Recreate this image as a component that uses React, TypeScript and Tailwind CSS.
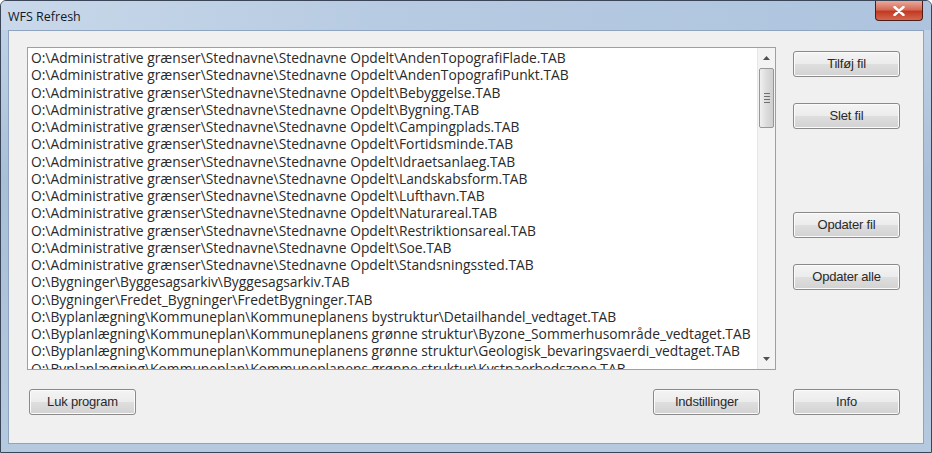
import React from "react";

const files: string[] = [
  "O:\\Administrative grænser\\Stednavne\\Stednavne Opdelt\\AndenTopografiFlade.TAB",
  "O:\\Administrative grænser\\Stednavne\\Stednavne Opdelt\\AndenTopografiPunkt.TAB",
  "O:\\Administrative grænser\\Stednavne\\Stednavne Opdelt\\Bebyggelse.TAB",
  "O:\\Administrative grænser\\Stednavne\\Stednavne Opdelt\\Bygning.TAB",
  "O:\\Administrative grænser\\Stednavne\\Stednavne Opdelt\\Campingplads.TAB",
  "O:\\Administrative grænser\\Stednavne\\Stednavne Opdelt\\Fortidsminde.TAB",
  "O:\\Administrative grænser\\Stednavne\\Stednavne Opdelt\\Idraetsanlaeg.TAB",
  "O:\\Administrative grænser\\Stednavne\\Stednavne Opdelt\\Landskabsform.TAB",
  "O:\\Administrative grænser\\Stednavne\\Stednavne Opdelt\\Lufthavn.TAB",
  "O:\\Administrative grænser\\Stednavne\\Stednavne Opdelt\\Naturareal.TAB",
  "O:\\Administrative grænser\\Stednavne\\Stednavne Opdelt\\Restriktionsareal.TAB",
  "O:\\Administrative grænser\\Stednavne\\Stednavne Opdelt\\Soe.TAB",
  "O:\\Administrative grænser\\Stednavne\\Stednavne Opdelt\\Standsningssted.TAB",
  "O:\\Bygninger\\Byggesagsarkiv\\Byggesagsarkiv.TAB",
  "O:\\Bygninger\\Fredet_Bygninger\\FredetBygninger.TAB",
  "O:\\Byplanlægning\\Kommuneplan\\Kommuneplanens bystruktur\\Detailhandel_vedtaget.TAB",
  "O:\\Byplanlægning\\Kommuneplan\\Kommuneplanens grønne struktur\\Byzone_Sommerhusområde_vedtaget.TAB",
  "O:\\Byplanlægning\\Kommuneplan\\Kommuneplanens grønne struktur\\Geologisk_bevaringsvaerdi_vedtaget.TAB",
  "O:\\Byplanlægning\\Kommuneplan\\Kommuneplanens grønne struktur\\Kystnaerhedszone.TAB",
];

function WinButton({ label, className = "" }: { label: string; className?: string }) {
  return (
    <button
      className={
        "w-[107px] h-[26px] rounded-[3px] border border-[#8a8a8a] text-[13px] text-[#2a2a2a] tracking-[-0.2px] " +
        "bg-[linear-gradient(to_bottom,#f4f4f4_0%,#ececec_48%,#dedede_52%,#d2d2d2_100%)] " +
        "shadow-[inset_0_0_0_1px_#fbfbfb] " +
        className
      }
    >
      {label}
    </button>
  );
}

function ScrollBar() {
  return (
    <div className="w-[18px] shrink-0 flex flex-col items-center bg-[#f3f3f3] border-l border-[#e6e6e6]">
      <div className="h-[20px] w-full flex items-center justify-center">
        <svg width="7" height="4" viewBox="0 0 7 4">
          <path d="M0 4 L3.5 0 L7 4 Z" fill="#505050" />
        </svg>
      </div>
      <div className="w-[15px] h-[60px] rounded-[2px] border border-[#979797] bg-[linear-gradient(to_right,#f0f0f0,#dcdcdc_50%,#cfcfcf)] flex flex-col items-center justify-center gap-[2px]">
        <div className="w-[6px] h-px bg-[#6f6f6f]" />
        <div className="w-[6px] h-px bg-[#6f6f6f]" />
        <div className="w-[6px] h-px bg-[#6f6f6f]" />
        <div className="w-[6px] h-px bg-[#6f6f6f]" />
      </div>
      <div className="flex-1" />
      <div className="h-[20px] w-full flex items-center justify-center">
        <svg width="7" height="4" viewBox="0 0 7 4">
          <path d="M0 0 L7 0 L3.5 4 Z" fill="#505050" />
        </svg>
      </div>
    </div>
  );
}

export default function App() {
  return (
    <div
      className="w-[932px] h-[453px] flex flex-col overflow-hidden rounded-t-[6px] border border-[#3a4658] bg-[linear-gradient(to_bottom,#c2d4e8,#a9bfd8_40%,#b5c9df)]"
      style={{ fontFamily: '"Liberation Sans", Arial, sans-serif' }}
    >
      {/* title bar */}
      <div className="h-[29px] shrink-0 flex items-start justify-between bg-[linear-gradient(to_right,#c9d8ea,#b7cbe2_40%,#aec4de)]">
        <div className="pl-[7px] pt-[7px] text-[12.5px] text-[#10182a]" style={{ fontFamily: '"Open Sans", "Liberation Sans", sans-serif' }}>
          WFS Refresh
        </div>
        <div className="mr-[8px] w-[48px] h-[20px] rounded-b-[4px] border border-t-0 border-[#4e1d17] bg-[linear-gradient(to_bottom,#e9a99c,#d56b57_45%,#c23a22_55%,#d4674f)] flex items-center justify-center">
          <svg width="12" height="10" viewBox="0 0 12 10">
            <path d="M1.5 1 L10.5 9 M10.5 1 L1.5 9" stroke="#ffffff" strokeWidth="2.4" strokeLinecap="round" />
          </svg>
        </div>
      </div>

      {/* client area */}
      <div className="flex-1 mx-[7px] mb-[8px] border border-[#8fa4bf] bg-[#f0f0f0] flex flex-col pl-[18px] pr-[23px] pt-[16px]">
        <div className="flex gap-[17px]">
          <div className="w-[749px] h-[323px] border border-[#9a9fa8] bg-white flex">
            <div className="flex-1 overflow-hidden pl-[3px] pt-px" style={{ fontFamily: '"Open Sans", "Liberation Sans", sans-serif' }}>
              {files.map((f) => (
                <div key={f} className="h-[17.25px] leading-[17.25px] text-[13.8px] text-[#2a2a2a] whitespace-nowrap">
                  {f}
                </div>
              ))}
            </div>
            <ScrollBar />
          </div>
          <div className="flex flex-col pt-[4px]">
            <WinButton label="Tilføj fil" />
            <WinButton label="Slet fil" className="mt-[26px]" />
            <WinButton label="Opdater fil" className="mt-[83px]" />
            <WinButton label="Opdater alle" className="mt-[26px]" />
          </div>
        </div>
        <div className="flex mt-[19px] pl-[2px]">
          <WinButton label="Luk program" />
          <div className="flex-1" />
          <WinButton label="Indstillinger" className="mr-[33px]" />
          <WinButton label="Info" />
        </div>
      </div>
    </div>
  );
}
